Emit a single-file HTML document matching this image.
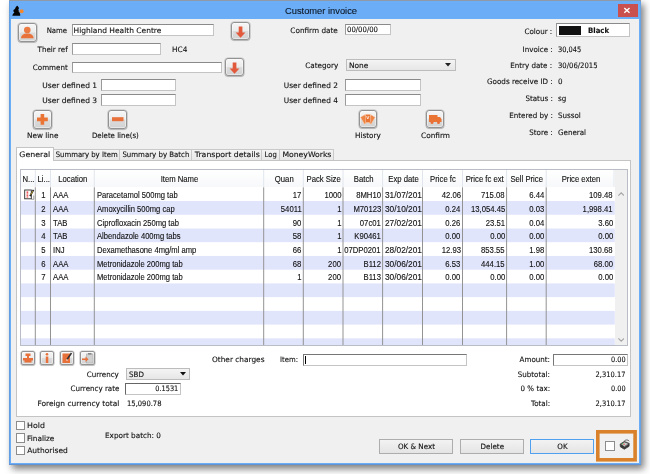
<!DOCTYPE html>
<html lang="en"><head><meta charset="utf-8"><title>Customer invoice</title>
<style>
html,body{margin:0;padding:0}
body{width:650px;height:474px;position:relative;overflow:hidden;background:#fff;font-family:"DejaVu Sans","Liberation Sans",sans-serif}
div,span,svg{position:absolute;box-sizing:border-box}
.win{left:9px;top:0;width:632px;height:465px;background:#6badf6;border-top:1px solid #8f9aa6;box-shadow:inset 0 -1px 0 0 #5f93d4,inset -1px 0 0 0 #68a2e6,inset 1px 0 0 0 #629de2,3px 4px 7px 0 rgba(0,0,0,.5)}
.client{left:11px;top:19px;width:628px;height:444px;background:#f0f0f0}
.close{left:618px;top:4px;width:20px;height:13px;background:#c9504f}
.t{-webkit-text-stroke:.12px #111;white-space:pre;line-height:10px;height:10px;color:#000}
.lab{font-family:"DejaVu Sans","Liberation Sans",sans-serif;font-size:7.5px;color:#111}
.b{font-weight:bold}
.ttl{font-family:"Liberation Sans",sans-serif;font-size:9.4px;color:#0c1a2c}
.tb{font-family:"Liberation Sans",sans-serif;font-size:8.4px;color:#111}
.fld{background:#fff;border:1px solid #c4c4c4;border-top-color:#8a8a8a;border-left-color:#9a9a9a}
.btn{border:1px solid #939393;border-radius:3px;background:linear-gradient(#f6f6f6,#ececec 48%,#dcdcdc 52%,#d2d2d2);box-shadow:inset 0 0 0 1px rgba(255,255,255,.45),0 0 0 .6px rgba(130,130,130,.45),0 1px 1px rgba(0,0,0,.18)}
.pb{border:1px solid #adadad;background:linear-gradient(#f3f3f3,#e4e4e4)}
.dd{border:1px solid #bcbcbc;background:linear-gradient(#f4f4f4,#e6e6e6)}
.cb{width:9px;height:9px;background:#fff;border:1px solid #8c8c8c}
.tab{top:149px;height:11px;border:1px solid #c9c9c9;border-bottom:none;background:linear-gradient(#f4f4f4,#e8e8e8)}
.tabsel{top:147px;height:14px;background:#fff;border:1px solid #c4c4c4;border-bottom:none}
.panel{left:16px;top:160px;width:615px;height:257px;background:#fff;border:1px solid #c4c4c4}
.grid{left:20px;top:169px;width:608px;height:177px;background:#fff;border:1px solid #b9bec6;overflow:hidden}
.stripe{left:0;width:593px;height:13.7px;background:#e3e5fb}
.vl{top:17px;width:1px;bottom:0;background:#8a8a8a}
.hl{top:0;width:1px;height:17px;background:#e3e8f0}
#txt{left:0;top:0;width:650px;height:474px;will-change:transform}

</style></head>
<body>
<div class="win"></div>
<div class="client"></div>
<div class="close"><svg width="20" height="13" viewBox="0 0 20 13" style="left:0;top:0"><path d="M6.3 4l5.2 4.8M11.5 4l-5.2 4.8" stroke="#fff" stroke-width="1.4" fill="none"/></svg></div>
<!-- app icon -->
<svg style="left:12px;top:5px" width="13" height="12" viewBox="0 0 13 12"><path d="M0.300 10.800C0.600 9 1.600 8 2.400 7.200 1.200 6.800 1 5.600 1.800 4.800 2.200 4.300 3 4 3.300 3.200 3.800 2 4.600 1 5.600 0.800c.4 1 .9 1.500 1.500 2.300C6.800 3.600 6.600 4 6.300 4.400c.5.500.5 1.200.2 1.800 1 .8 1.500 2 1.600 3 .3.600.2 1.200 0 1.600z" fill="#050505"/><circle cx="9.600" cy="6.200" r="2" fill="#f5872b"/></svg>

<!-- fields -->
<div class="fld" style="left:72px;top:24px;width:142px;height:12px"></div>
<div class="fld" style="left:72px;top:43px;width:89px;height:12px"></div>
<div class="fld" style="left:72px;top:62px;width:150px;height:11px"></div>
<div class="fld" style="left:101px;top:79px;width:75px;height:12px"></div>
<div class="fld" style="left:101px;top:94px;width:75px;height:12px"></div>
<div class="fld" style="left:345px;top:24px;width:46px;height:11px"></div>
<div class="dd" style="left:346px;top:59px;width:110px;height:12px"></div>
<svg style="left:445px;top:63px" width="6" height="4" viewBox="0 0 6 4"><path d="M0 0h6L3 3.600z" fill="#222"/></svg>
<div class="fld" style="left:345px;top:79px;width:76px;height:12px"></div>
<div class="fld" style="left:345px;top:94px;width:76px;height:12px"></div>
<div class="fld" style="left:556px;top:23px;width:74px;height:14px"></div>
<div style="left:559px;top:26px;width:22px;height:9px;background:#111"></div>

<!-- icon buttons -->
<div class="btn" style="left:18px;top:23px;width:19px;height:19px"></div>
<svg style="left:18px;top:23px" width="19" height="19" viewBox="0 0 19 19"><circle cx="9.300" cy="7" r="3.300" fill="#ea7a42"/><path d="M3 15.200c0-3 2.500-4.700 6.300-4.700s6.300 1.700 6.300 4.700z" fill="#e8723a"/></svg>
<div class="btn" style="left:231px;top:22px;width:19px;height:18px"></div>
<svg style="left:231px;top:22px" width="19" height="18" viewBox="0 0 19 18"><path d="M7.700 4.500h3.700v6h3l-4.850 5.200L4.600 10.500h3.100z" fill="#e2583a"/></svg>
<div class="btn" style="left:225px;top:58px;width:19px;height:18px"></div>
<svg style="left:225px;top:58px" width="19" height="18" viewBox="0 0 19 18"><path d="M7.700 4.500h3.700v6h3l-4.850 5.200L4.600 10.500h3.100z" fill="#e2583a"/></svg>
<div class="btn" style="left:33px;top:110px;width:19px;height:19px"></div>
<svg style="left:33px;top:110px" width="19" height="19" viewBox="0 0 19 19"><path d="M7.600 4h3.600v3.600h3.600v3.600h-3.600v3.600H7.600v-3.600H4V7.600h3.600z" fill="#ea7434"/></svg>
<div class="btn" style="left:108px;top:110px;width:19px;height:19px"></div>
<svg style="left:108px;top:110px" width="19" height="19" viewBox="0 0 19 19"><rect x="4" y="7.200" width="11.500" height="4" fill="#e8703a"/></svg>
<div class="btn" style="left:359px;top:110px;width:18px;height:18px"></div>
<svg style="left:359px;top:110px" width="18" height="18" viewBox="0 0 18 18"><g stroke="#f7d3b8" stroke-width=".5"><rect x="6.300" y="4.600" width="5" height="8" fill="#ee8446" transform="rotate(-30 8.800 15)"/><rect x="6.300" y="4.600" width="5" height="8" fill="#ee8446" transform="rotate(30 8.800 15)"/><rect x="6.300" y="4.300" width="5" height="8.200" fill="#ea7434"/></g><path d="M7.600 6l1.200 3 1.200-3" stroke="#fff" stroke-width=".7" fill="none"/></svg>
<div class="btn" style="left:426px;top:110px;width:18px;height:18px"></div>
<svg style="left:426px;top:110px" width="18" height="18" viewBox="0 0 18 18"><path d="M3 5h8.500v2h2.500l1.500 2v3H3z" fill="#ea7434"/><circle cx="6" cy="12.500" r="1.500" fill="#e8703a"/><circle cx="12.500" cy="12.500" r="1.500" fill="#e8703a"/></svg>

<!-- tabs -->
<div class="panel"></div>
<div class="tab" style="left:53px;width:67px"></div>
<div class="tab" style="left:119px;width:73px"></div>
<div class="tab" style="left:191px;width:71px"></div>
<div class="tab" style="left:261px;width:19px"></div>
<div class="tab" style="left:279px;width:55px"></div>
<div class="tabsel" style="left:16px;width:38px"></div>

<!-- grid -->
<div class="grid">
 <svg style="left:0;top:0" width="606" height="177" viewBox="0 0 606 177" fill="#e1e5fc"><rect x="0" y="31.03" width="593.8" height="13.73"/><rect x="0" y="58.49" width="593.8" height="13.73"/><rect x="0" y="85.95" width="593.8" height="13.73"/><rect x="0" y="113.41" width="593.8" height="13.73"/><rect x="0" y="140.87" width="593.8" height="13.73"/><rect x="0" y="168.33" width="593.8" height="13.73"/></svg>
 <div style="left:0;top:0;width:593px;height:17px;background:linear-gradient(#fff,#f7f8fa)"></div>
 <svg style="left:0;top:0" width="606" height="177" viewBox="0 0 606 177" fill="none" stroke-width="1"><path d="M14.3 17.3V177" stroke="#939393"/><path d="M14.3 0V17" stroke="#e1e6ee"/><path d="M29.5 17.3V177" stroke="#939393"/><path d="M29.5 0V17" stroke="#e1e6ee"/><path d="M73.3 17.3V177" stroke="#939393"/><path d="M73.3 0V17" stroke="#e1e6ee"/><path d="M242.7 17.3V177" stroke="#939393"/><path d="M242.7 0V17" stroke="#e1e6ee"/><path d="M282.3 17.3V177" stroke="#939393"/><path d="M282.3 0V17" stroke="#e1e6ee"/><path d="M322.0 17.3V177" stroke="#939393"/><path d="M322.0 0V17" stroke="#e1e6ee"/><path d="M361.6 17.3V177" stroke="#939393"/><path d="M361.6 0V17" stroke="#e1e6ee"/><path d="M401.5 17.3V177" stroke="#939393"/><path d="M401.5 0V17" stroke="#e1e6ee"/><path d="M441.5 17.3V177" stroke="#939393"/><path d="M441.5 0V17" stroke="#e1e6ee"/><path d="M485.6 17.3V177" stroke="#939393"/><path d="M485.6 0V17" stroke="#e1e6ee"/><path d="M525.2 17.3V177" stroke="#939393"/><path d="M525.2 0V17" stroke="#e1e6ee"/><path d="M593 0V17" stroke="#e1e6ee"/></svg>
 <div style="left:594px;top:0;width:13px;height:177px;background:#f0f0f0"></div>
 <svg style="left:596.500px;top:22.300px" width="6.400" height="4" viewBox="0 0 8 5"><path d="M.500 4.500L4 1l3.500 3.500" stroke="#a6a6a6" stroke-width="1.400" fill="none"/></svg>
 <svg style="left:596.500px;top:167.500px" width="6.400" height="4" viewBox="0 0 8 5"><path d="M.500 .500L4 4 7.500 .500" stroke="#a6a6a6" stroke-width="1.400" fill="none"/></svg>
</div>
<!-- row icon -->
<svg style="left:23.500px;top:189px" width="11" height="11" viewBox="0 0 11 11"><path d="M7.500 10.300h2.300V6.500" stroke="#888" stroke-width=".8" fill="none"/><rect x=".700" y="1" width="6.600" height="8.800" fill="#fff" stroke="#2a2a2a" stroke-width=".9"/><path d="M3.400 2.600v6" stroke="#e8282a" stroke-width="1.700" stroke-dasharray="1.200 .600"/><path d="M9.500 .900L6 7.200" stroke="#222" stroke-width="1.700"/><path d="M8.800 2L6.700 5.800" stroke="#f2c230" stroke-width=".7"/></svg>

<!-- small buttons -->
<div class="btn" style="left:21px;top:351px;width:14px;height:14px;border-radius:2px"></div>
<svg style="left:21px;top:351px" width="14" height="14" viewBox="0 0 14 14"><path d="M4.500 2.500h5v2.500h-1.500v2h4v2.500h-1.500v2h-7v-2H2V7h4V5H4.500z" fill="#e8703a"/></svg>
<div class="btn" style="left:40px;top:351px;width:14px;height:14px;border-radius:2px"></div>
<svg style="left:40px;top:351px" width="14" height="14" viewBox="0 0 14 14"><circle cx="7" cy="3.300" r="1.300" fill="#e8703a"/><rect x="5.800" y="5.500" width="2.500" height="6.500" fill="#e8703a"/></svg>
<div class="btn" style="left:60px;top:351px;width:14px;height:14px;border-radius:2px"></div>
<svg style="left:60px;top:351px" width="14" height="14" viewBox="0 0 14 14"><rect x="2.500" y="2.500" width="7.500" height="9.500" fill="#e8703a"/><path d="M11.500 2L7 8.500" stroke="#333" stroke-width="1.500"/><path d="M6 9h2" stroke="#fff" stroke-width=".8"/></svg>
<div class="btn" style="left:80px;top:351px;width:15px;height:14px;border-radius:2px"></div>
<svg style="left:80px;top:351px" width="15" height="14" viewBox="0 0 15 14"><rect x="6.500" y="3" width="6.500" height="9" fill="#d0d0d0" stroke="#aaa" stroke-width=".6"/><rect x="8" y="2" width="3.500" height="1.600" fill="#888"/><path d="M2 7.500h3.500V5.500l3 2.800-3 2.800V9H2z" fill="#e8703a"/></svg>

<!-- bottom fields -->
<div class="fld" style="left:303px;top:354px;width:164px;height:12px;border-top-color:#777;border-left-color:#777"></div>
<div style="left:305px;top:356px;width:1px;height:8px;background:#000"></div>
<div class="fld" style="left:553px;top:354px;width:75px;height:12px;border-top-color:#777;border-left-color:#777"></div>
<div class="dd" style="left:126px;top:368px;width:64px;height:12px"></div>
<svg style="left:180px;top:372px" width="6" height="4" viewBox="0 0 6 4"><path d="M0 0h6L3 3.600z" fill="#111"/></svg>
<div class="fld" style="left:125px;top:383px;width:56px;height:12px;border-top-color:#666;border-left-color:#666"></div>

<!-- checkboxes -->
<div class="cb" style="left:16px;top:421px"></div>
<div class="cb" style="left:16px;top:433px;height:10px"></div>
<div class="cb" style="left:16px;top:446px"></div>

<!-- push buttons -->
<div class="pb" style="left:379px;top:439px;width:74px;height:15px"></div>
<div class="pb" style="left:460px;top:439px;width:64px;height:15px"></div>
<div class="pb" style="left:530px;top:439px;width:64px;height:15px;border-color:#4ea0f0"></div>

<!-- highlight box -->
<svg style="left:590px;top:424px" width="56" height="44" viewBox="0 0 56 44"><rect x="7.800" y="7.800" width="37.300" height="28" fill="none" stroke="#d9822b" stroke-width="3.600"/></svg>
<div class="cb" style="left:605px;top:441px;width:10px;height:10px"></div>
<svg style="left:618.500px;top:439.400px;opacity:.88" width="11.900" height="11" viewBox="0 0 13 12"><path d="M1.200 5.600L5.800 2.600 11.200 4.800 11 8 5.800 11.200 1.600 8.600z" fill="#1e1e1e" stroke="#1e1e1e" stroke-width=".8" stroke-linejoin="round"/><path d="M2.400 5.700L5.900 3.500 10 5.200 5.700 8z" fill="#c9c9c9"/><path d="M5.300 8.600l4.800-3" stroke="#939393" stroke-width=".7" fill="none"/><path d="M5.600 2.600C6.800 .600 10 .400 11.200 2.400" stroke="#333" stroke-width=".9" fill="none"/><circle cx="3.900" cy="5.100" r=".8" fill="#2faa3c"/><circle cx="5.500" cy="5.700" r=".8" fill="#e03030"/></svg>

<div id="txt">
<span class="t ttl" style="top:6.00px;left:285.00px;transform:scaleX(0.9940);transform-origin:0 50%;">Customer invoice</span>
<span class="t lab" style="top:25.70px;right:582.40px;transform:scaleX(0.9259);transform-origin:100% 50%;">Name</span>
<span class="t lab" style="top:44.80px;right:582.40px;transform:scaleX(0.9500);transform-origin:100% 50%;">Their ref</span>
<span class="t lab" style="top:63.30px;right:582.40px;transform:scaleX(0.9500);transform-origin:100% 50%;">Comment</span>
<span class="t lab" style="top:80.90px;right:552.90px;">User defined 1</span>
<span class="t lab" style="top:96.10px;right:552.90px;">User defined 3</span>
<span class="t lab" style="top:25.70px;left:73.50px;">Highland Health Centre</span>
<span class="t lab" style="top:44.80px;left:172.20px;transform:scaleX(0.9772);transform-origin:0 50%;">HC4</span>
<span class="t lab" style="top:131.30px;left:26.60px;transform:scaleX(0.9727);transform-origin:0 50%;">New line</span>
<span class="t lab" style="top:131.30px;left:91.60px;transform:scaleX(0.9299);transform-origin:0 50%;">Delete line(s)</span>
<span class="t lab" style="top:25.70px;right:312.00px;transform:scaleX(0.9722);transform-origin:100% 50%;">Confirm date</span>
<span class="t lab" style="top:25.30px;left:347.00px;transform:scaleX(0.9202);transform-origin:0 50%;">00/00/00</span>
<span class="t lab" style="top:60.70px;right:312.00px;transform:scaleX(0.9631);transform-origin:100% 50%;">Category</span>
<span class="t lab" style="top:60.70px;left:348.60px;transform:scaleX(0.9909);transform-origin:0 50%;">None</span>
<span class="t lab" style="top:81.10px;right:312.00px;transform:scaleX(0.9841);transform-origin:100% 50%;">User defined 2</span>
<span class="t lab" style="top:96.10px;right:312.00px;transform:scaleX(0.9841);transform-origin:100% 50%;">User defined 4</span>
<span class="t lab" style="top:130.70px;left:355.20px;transform:scaleX(0.9667);transform-origin:0 50%;">History</span>
<span class="t lab" style="top:130.70px;left:421.00px;transform:scaleX(0.9810);transform-origin:0 50%;">Confirm</span>
<span class="t lab" style="top:26.70px;right:97.40px;transform:scaleX(0.9500);transform-origin:100% 50%;">Colour :</span>
<span class="t lab" style="top:44.50px;right:97.40px;transform:scaleX(0.9500);transform-origin:100% 50%;">Invoice :</span>
<span class="t lab" style="top:44.50px;left:558.00px;transform:scaleX(0.8876);transform-origin:0 50%;">30,045</span>
<span class="t lab" style="top:60.70px;right:97.40px;transform:scaleX(0.9500);transform-origin:100% 50%;">Entry date :</span>
<span class="t lab" style="top:60.70px;left:558.00px;transform:scaleX(0.9136);transform-origin:0 50%;">30/06/2015</span>
<span class="t lab" style="top:77.40px;right:97.40px;transform:scaleX(0.9559);transform-origin:100% 50%;">Goods receive ID :</span>
<span class="t lab" style="top:77.40px;left:558.00px;transform:scaleX(0.9500);transform-origin:0 50%;">0</span>
<span class="t lab" style="top:93.70px;right:97.40px;transform:scaleX(0.9500);transform-origin:100% 50%;">Status :</span>
<span class="t lab" style="top:93.70px;left:558.00px;transform:scaleX(0.9500);transform-origin:0 50%;">sg</span>
<span class="t lab" style="top:110.70px;right:97.40px;transform:scaleX(0.9500);transform-origin:100% 50%;">Entered by :</span>
<span class="t lab" style="top:110.70px;left:558.00px;transform:scaleX(0.9500);transform-origin:0 50%;">Sussol</span>
<span class="t lab" style="top:127.50px;right:97.40px;transform:scaleX(0.9500);transform-origin:100% 50%;">Store :</span>
<span class="t lab" style="top:127.50px;left:558.00px;transform:scaleX(0.9500);transform-origin:0 50%;">General</span>
<span class="t lab b" style="top:25.90px;left:588.40px;transform:scaleX(0.9212);transform-origin:0 50%;">Black</span>
<span class="t lab" style="top:149.70px;left:20.22px;transform:scaleX(1.0486);transform-origin:50% 50%;">General</span>
<span class="t lab" style="top:149.70px;left:52.85px;transform:scaleX(0.9213);transform-origin:50% 50%;">Summary by Item</span>
<span class="t lab" style="top:149.70px;left:120.11px;transform:scaleX(0.9334);transform-origin:50% 50%;">Summary by Batch</span>
<span class="t lab" style="top:149.70px;left:195.71px;transform:scaleX(1.0387);transform-origin:50% 50%;">Transport details</span>
<span class="t lab" style="top:149.70px;left:264.30px;transform:scaleX(0.9100);transform-origin:50% 50%;">Log</span>
<span class="t lab" style="top:149.70px;left:283.12px;transform:scaleX(1.0258);transform-origin:50% 50%;">MoneyWorks</span>
<span class="t tb" style="top:174.00px;left:21.73px;transform:scaleX(0.9200);transform-origin:50% 50%;">N...</span>
<span class="t tb" style="top:174.00px;left:36.50px;transform:scaleX(0.9200);transform-origin:50% 50%;">Li...</span>
<span class="t tb" style="top:174.00px;left:56.66px;transform:scaleX(0.9200);transform-origin:50% 50%;">Location</span>
<span class="t tb" style="top:174.00px;left:158.87px;transform:scaleX(0.9200);transform-origin:50% 50%;">Item Name</span>
<span class="t tb" style="top:174.00px;left:273.75px;transform:scaleX(0.9200);transform-origin:50% 50%;">Quan</span>
<span class="t tb" style="top:174.00px;left:305.02px;transform:scaleX(0.9200);transform-origin:50% 50%;">Pack Size</span>
<span class="t tb" style="top:174.00px;left:352.59px;transform:scaleX(0.9200);transform-origin:50% 50%;">Batch</span>
<span class="t tb" style="top:174.00px;left:386.52px;transform:scaleX(0.9200);transform-origin:50% 50%;">Exp date</span>
<span class="t tb" style="top:174.00px;left:429.03px;transform:scaleX(0.9200);transform-origin:50% 50%;">Price fc</span>
<span class="t tb" style="top:174.00px;left:464.34px;transform:scaleX(0.9200);transform-origin:50% 50%;">Price fc ext</span>
<span class="t tb" style="top:174.00px;left:509.21px;transform:scaleX(0.9200);transform-origin:50% 50%;">Sell Price</span>
<span class="t tb" style="top:174.00px;left:559.65px;transform:scaleX(0.9200);transform-origin:50% 50%;">Price exten</span>
<span class="t tb" style="top:190.15px;right:604.60px;transform:scaleX(0.9200);transform-origin:100% 50%;">1</span>
<span class="t tb" style="top:190.15px;left:53.00px;transform:scaleX(0.9200);transform-origin:0 50%;">AAA</span>
<span class="t tb" style="top:190.15px;left:96.50px;transform:scaleX(0.9070);transform-origin:0 50%;">Paracetamol 500mg tab</span>
<span class="t tb" style="top:190.15px;right:348.40px;transform:scaleX(0.9200);transform-origin:100% 50%;">17</span>
<span class="t tb" style="top:190.15px;right:308.70px;transform:scaleX(0.9200);transform-origin:100% 50%;">1000</span>
<span class="t tb" style="top:190.15px;right:269.00px;transform:scaleX(0.9200);transform-origin:100% 50%;">8MH10</span>
<span class="t tb" style="top:190.15px;left:384.80px;transform:scaleX(0.9929);transform-origin:0 50%;">31/07/201</span>
<span class="t tb" style="top:190.15px;right:189.50px;transform:scaleX(0.9200);transform-origin:100% 50%;">42.06</span>
<span class="t tb" style="top:190.15px;right:145.20px;transform:scaleX(0.9200);transform-origin:100% 50%;">715.08</span>
<span class="t tb" style="top:190.15px;right:105.40px;transform:scaleX(0.9200);transform-origin:100% 50%;">6.44</span>
<span class="t tb" style="top:190.15px;right:37.20px;transform:scaleX(0.9200);transform-origin:100% 50%;">109.48</span>
<span class="t tb" style="top:203.85px;right:604.60px;transform:scaleX(0.9200);transform-origin:100% 50%;">2</span>
<span class="t tb" style="top:203.85px;left:53.00px;transform:scaleX(0.9200);transform-origin:0 50%;">AAA</span>
<span class="t tb" style="top:203.85px;left:96.50px;transform:scaleX(0.9070);transform-origin:0 50%;">Amoxycillin 500mg cap</span>
<span class="t tb" style="top:203.85px;right:348.40px;transform:scaleX(0.9200);transform-origin:100% 50%;">54011</span>
<span class="t tb" style="top:203.85px;right:308.70px;transform:scaleX(0.9200);transform-origin:100% 50%;">1</span>
<span class="t tb" style="top:203.85px;right:269.00px;transform:scaleX(0.9200);transform-origin:100% 50%;">M70123</span>
<span class="t tb" style="top:203.85px;left:384.80px;transform:scaleX(0.9929);transform-origin:0 50%;">30/10/201</span>
<span class="t tb" style="top:203.85px;right:189.50px;transform:scaleX(0.9200);transform-origin:100% 50%;">0.24</span>
<span class="t tb" style="top:203.85px;right:145.20px;transform:scaleX(0.9200);transform-origin:100% 50%;">13,054.45</span>
<span class="t tb" style="top:203.85px;right:105.40px;transform:scaleX(0.9200);transform-origin:100% 50%;">0.03</span>
<span class="t tb" style="top:203.85px;right:37.20px;transform:scaleX(0.9200);transform-origin:100% 50%;">1,998.41</span>
<span class="t tb" style="top:217.55px;right:604.60px;transform:scaleX(0.9200);transform-origin:100% 50%;">3</span>
<span class="t tb" style="top:217.55px;left:53.00px;transform:scaleX(0.9200);transform-origin:0 50%;">TAB</span>
<span class="t tb" style="top:217.55px;left:96.50px;transform:scaleX(0.9070);transform-origin:0 50%;">Ciprofloxacin 250mg tab</span>
<span class="t tb" style="top:217.55px;right:348.40px;transform:scaleX(0.9200);transform-origin:100% 50%;">90</span>
<span class="t tb" style="top:217.55px;right:308.70px;transform:scaleX(0.9200);transform-origin:100% 50%;">1</span>
<span class="t tb" style="top:217.55px;right:269.00px;transform:scaleX(0.9200);transform-origin:100% 50%;">07c01</span>
<span class="t tb" style="top:217.55px;left:384.80px;transform:scaleX(0.9929);transform-origin:0 50%;">27/02/201</span>
<span class="t tb" style="top:217.55px;right:189.50px;transform:scaleX(0.9200);transform-origin:100% 50%;">0.26</span>
<span class="t tb" style="top:217.55px;right:145.20px;transform:scaleX(0.9200);transform-origin:100% 50%;">23.51</span>
<span class="t tb" style="top:217.55px;right:105.40px;transform:scaleX(0.9200);transform-origin:100% 50%;">0.04</span>
<span class="t tb" style="top:217.55px;right:37.20px;transform:scaleX(0.9200);transform-origin:100% 50%;">3.60</span>
<span class="t tb" style="top:231.25px;right:604.60px;transform:scaleX(0.9200);transform-origin:100% 50%;">4</span>
<span class="t tb" style="top:231.25px;left:53.00px;transform:scaleX(0.9200);transform-origin:0 50%;">TAB</span>
<span class="t tb" style="top:231.25px;left:96.50px;transform:scaleX(0.9070);transform-origin:0 50%;">Albendazole 400mg tabs</span>
<span class="t tb" style="top:231.25px;right:348.40px;transform:scaleX(0.9200);transform-origin:100% 50%;">58</span>
<span class="t tb" style="top:231.25px;right:308.70px;transform:scaleX(0.9200);transform-origin:100% 50%;">1</span>
<span class="t tb" style="top:231.25px;right:269.00px;transform:scaleX(0.9200);transform-origin:100% 50%;">K90461</span>
<span class="t tb" style="top:231.25px;right:189.50px;transform:scaleX(0.9200);transform-origin:100% 50%;">0.00</span>
<span class="t tb" style="top:231.25px;right:145.20px;transform:scaleX(0.9200);transform-origin:100% 50%;">0.00</span>
<span class="t tb" style="top:231.25px;right:105.40px;transform:scaleX(0.9200);transform-origin:100% 50%;">0.00</span>
<span class="t tb" style="top:231.25px;right:37.20px;transform:scaleX(0.9200);transform-origin:100% 50%;">0.00</span>
<span class="t tb" style="top:244.95px;right:604.60px;transform:scaleX(0.9200);transform-origin:100% 50%;">5</span>
<span class="t tb" style="top:244.95px;left:53.00px;transform:scaleX(0.9200);transform-origin:0 50%;">INJ</span>
<span class="t tb" style="top:244.95px;left:96.50px;transform:scaleX(0.9070);transform-origin:0 50%;">Dexamethasone 4mg/ml amp</span>
<span class="t tb" style="top:244.95px;right:348.40px;transform:scaleX(0.9200);transform-origin:100% 50%;">66</span>
<span class="t tb" style="top:244.95px;right:308.70px;transform:scaleX(0.9200);transform-origin:100% 50%;">1</span>
<span class="t tb" style="top:244.95px;right:269.00px;transform:scaleX(0.9200);transform-origin:100% 50%;">07DP0201</span>
<span class="t tb" style="top:244.95px;left:384.80px;transform:scaleX(0.9929);transform-origin:0 50%;">28/02/201</span>
<span class="t tb" style="top:244.95px;right:189.50px;transform:scaleX(0.9200);transform-origin:100% 50%;">12.93</span>
<span class="t tb" style="top:244.95px;right:145.20px;transform:scaleX(0.9200);transform-origin:100% 50%;">853.55</span>
<span class="t tb" style="top:244.95px;right:105.40px;transform:scaleX(0.9200);transform-origin:100% 50%;">1.98</span>
<span class="t tb" style="top:244.95px;right:37.20px;transform:scaleX(0.9200);transform-origin:100% 50%;">130.68</span>
<span class="t tb" style="top:258.65px;right:604.60px;transform:scaleX(0.9200);transform-origin:100% 50%;">6</span>
<span class="t tb" style="top:258.65px;left:53.00px;transform:scaleX(0.9200);transform-origin:0 50%;">AAA</span>
<span class="t tb" style="top:258.65px;left:96.50px;transform:scaleX(0.9070);transform-origin:0 50%;">Metronidazole 200mg tab</span>
<span class="t tb" style="top:258.65px;right:348.40px;transform:scaleX(0.9200);transform-origin:100% 50%;">68</span>
<span class="t tb" style="top:258.65px;right:308.70px;transform:scaleX(0.9200);transform-origin:100% 50%;">200</span>
<span class="t tb" style="top:258.65px;right:269.00px;transform:scaleX(0.9200);transform-origin:100% 50%;">B112</span>
<span class="t tb" style="top:258.65px;left:384.80px;transform:scaleX(0.9929);transform-origin:0 50%;">30/06/201</span>
<span class="t tb" style="top:258.65px;right:189.50px;transform:scaleX(0.9200);transform-origin:100% 50%;">6.53</span>
<span class="t tb" style="top:258.65px;right:145.20px;transform:scaleX(0.9200);transform-origin:100% 50%;">444.15</span>
<span class="t tb" style="top:258.65px;right:105.40px;transform:scaleX(0.9200);transform-origin:100% 50%;">1.00</span>
<span class="t tb" style="top:258.65px;right:37.20px;transform:scaleX(0.9200);transform-origin:100% 50%;">68.00</span>
<span class="t tb" style="top:272.35px;right:604.60px;transform:scaleX(0.9200);transform-origin:100% 50%;">7</span>
<span class="t tb" style="top:272.35px;left:53.00px;transform:scaleX(0.9200);transform-origin:0 50%;">AAA</span>
<span class="t tb" style="top:272.35px;left:96.50px;transform:scaleX(0.9070);transform-origin:0 50%;">Metronidazole 200mg tab</span>
<span class="t tb" style="top:272.35px;right:348.40px;transform:scaleX(0.9200);transform-origin:100% 50%;">1</span>
<span class="t tb" style="top:272.35px;right:308.70px;transform:scaleX(0.9200);transform-origin:100% 50%;">200</span>
<span class="t tb" style="top:272.35px;right:269.00px;transform:scaleX(0.9200);transform-origin:100% 50%;">B113</span>
<span class="t tb" style="top:272.35px;left:384.80px;transform:scaleX(0.9929);transform-origin:0 50%;">30/06/201</span>
<span class="t tb" style="top:272.35px;right:189.50px;transform:scaleX(0.9200);transform-origin:100% 50%;">0.00</span>
<span class="t tb" style="top:272.35px;right:145.20px;transform:scaleX(0.9200);transform-origin:100% 50%;">0.00</span>
<span class="t tb" style="top:272.35px;right:105.40px;transform:scaleX(0.9200);transform-origin:100% 50%;">0.00</span>
<span class="t tb" style="top:272.35px;right:37.20px;transform:scaleX(0.9200);transform-origin:100% 50%;">0.00</span>
<span class="t lab" style="top:355.30px;left:211.80px;transform:scaleX(0.9833);transform-origin:0 50%;">Other charges</span>
<span class="t lab" style="top:355.30px;left:280.00px;transform:scaleX(0.9179);transform-origin:0 50%;">Item:</span>
<span class="t lab" style="top:369.70px;right:531.00px;transform:scaleX(0.9500);transform-origin:100% 50%;">Currency</span>
<span class="t lab" style="top:369.70px;left:128.50px;transform:scaleX(0.9500);transform-origin:0 50%;">SBD</span>
<span class="t lab" style="top:384.20px;right:531.00px;transform:scaleX(0.9500);transform-origin:100% 50%;">Currency rate</span>
<span class="t lab" style="top:384.20px;right:471.50px;transform:scaleX(0.8762);transform-origin:100% 50%;">0.1531</span>
<span class="t lab" style="top:398.50px;right:531.00px;transform:scaleX(0.9954);transform-origin:100% 50%;">Foreign currency total</span>
<span class="t lab" style="top:398.50px;left:126.80px;transform:scaleX(0.9038);transform-origin:0 50%;">15,090.78</span>
<span class="t lab" style="top:355.30px;right:100.00px;transform:scaleX(0.9500);transform-origin:100% 50%;">Amount:</span>
<span class="t lab" style="top:355.30px;right:24.40px;transform:scaleX(0.8741);transform-origin:100% 50%;">0.00</span>
<span class="t lab" style="top:369.90px;right:100.00px;transform:scaleX(0.9500);transform-origin:100% 50%;">Subtotal:</span>
<span class="t lab" style="top:369.90px;right:24.40px;transform:scaleX(0.8920);transform-origin:100% 50%;">2,310.17</span>
<span class="t lab" style="top:384.40px;right:100.00px;transform:scaleX(0.9500);transform-origin:100% 50%;">0 % tax:</span>
<span class="t lab" style="top:384.40px;right:24.40px;transform:scaleX(0.8741);transform-origin:100% 50%;">0.00</span>
<span class="t lab" style="top:398.70px;right:100.00px;transform:scaleX(0.9500);transform-origin:100% 50%;">Total:</span>
<span class="t lab" style="top:398.70px;right:24.40px;transform:scaleX(0.8920);transform-origin:100% 50%;">2,310.17</span>
<span class="t lab" style="top:421.40px;left:27.20px;transform:scaleX(1.0481);transform-origin:0 50%;">Hold</span>
<span class="t lab" style="top:433.70px;left:27.20px;transform:scaleX(0.9813);transform-origin:0 50%;">Finalize</span>
<span class="t lab" style="top:446.00px;left:27.20px;">Authorised</span>
<span class="t lab" style="top:431.20px;left:105.40px;transform:scaleX(0.9689);transform-origin:0 50%;">Export batch: 0</span>
<span class="t lab" style="top:441.90px;left:396.54px;transform:scaleX(0.9500);transform-origin:50% 50%;">OK &amp; Next</span>
<span class="t lab" style="top:441.90px;left:479.67px;transform:scaleX(0.9500);transform-origin:50% 50%;">Delete</span>
<span class="t lab" style="top:441.90px;left:556.89px;transform:scaleX(0.9500);transform-origin:50% 50%;">OK</span>
</div>
</body></html>
